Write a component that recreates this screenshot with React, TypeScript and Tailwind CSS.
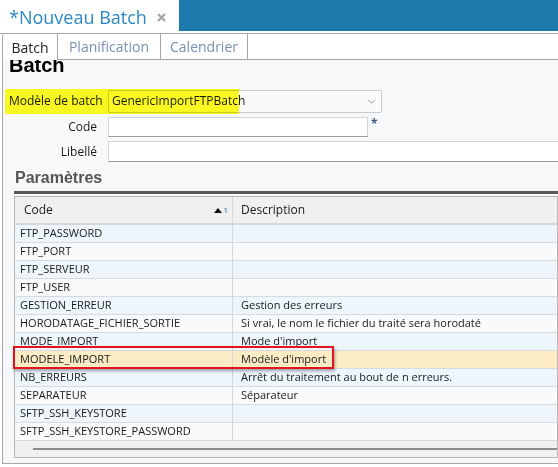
import { ChevronDown } from "lucide-react";

type Param = {
  code: string;
  description: string;
};

const PARAMS: Param[] = [
  { code: "FTP_PASSWORD", description: "" },
  { code: "FTP_PORT", description: "" },
  { code: "FTP_SERVEUR", description: "" },
  { code: "FTP_USER", description: "" },
  { code: "GESTION_ERREUR", description: "Gestion des erreurs" },
  {
    code: "HORODATAGE_FICHIER_SORTIE",
    description: "Si vrai, le nom le fichier du traité sera horodaté",
  },
  { code: "MODE_IMPORT", description: "Mode d'import" },
  { code: "MODELE_IMPORT", description: "Modèle d'import" },
  { code: "NB_ERREURS", description: "Arrêt du traitement au bout de n erreurs." },
  { code: "SEPARATEUR", description: "Séparateur" },
  { code: "SFTP_SSH_KEYSTORE", description: "" },
  { code: "SFTP_SSH_KEYSTORE_PASSWORD", description: "" },
];

const SELECTED = "MODELE_IMPORT";

const ParamRow = ({ param, index }: { param: Param; index: number }) => {
  const isSelected = param.code === SELECTED;
  const bg = isSelected
    ? "bg-[#fbecc6]"
    : index % 2 === 0
      ? "bg-[#edf5fd]"
      : "bg-[#f9fafb]";

  return (
    <div className={`flex h-[18px] border-b border-[#dadada] ${bg}`}>
      <div className="w-[218px] shrink-0 pl-[5px] border-r border-[#d6d6d6] flex items-center whitespace-nowrap">
        {param.code}
      </div>
      <div className="flex-1 pl-[8px] flex items-center whitespace-nowrap">
        {param.description}
      </div>
    </div>
  );
};

export default function App() {
  return (
    <div className="relative w-[558px] h-[467px] overflow-hidden bg-white font-['Open_Sans',sans-serif] text-[11px] text-[#1a1a1a]">
      {/* title bar */}
      <div className="flex h-[33px]">
        <div className="w-[179px] shrink-0 flex items-center pl-[9px] gap-[10px]">
          <span className="text-[18px] leading-none text-[#2b88c2] whitespace-nowrap">
            *Nouveau Batch
          </span>
          <svg width="9" height="9" viewBox="0 0 9 9" className="mt-[1px]">
            <path d="M1 1 L8 8 M8 1 L1 8" stroke="#a3a3a3" strokeWidth="2.2" />
          </svg>
        </div>
        <div className="flex-1 h-[31px] bg-[#1b7aab]" />
      </div>

      {/* tabs */}
      <div className="flex h-[27px] border-t border-[#a6a6a6] text-[14px]">
        <div className="w-[2px] shrink-0" />
        <div className="w-[56px] shrink-0 bg-white border-x border-[#a6a6a6] rounded-tl-[3px] flex items-center justify-center text-[#222]">
          Batch
        </div>
        <div className="w-[103px] shrink-0 border-r border-b border-[#a6a6a6] flex items-center justify-center text-[#7890b0]">
          Planification
        </div>
        <div className="w-[87px] shrink-0 border-r border-b border-[#a6a6a6] flex items-center justify-center text-[#7890b0]">
          Calendrier
        </div>
        <div className="flex-1 border-b border-[#a6a6a6]" />
      </div>

      {/* panel */}
      <div className="ml-[2px] h-[404px] border-l border-b border-[#a6a6a6] bg-[#f7f8fa] overflow-hidden">
        <h1 className="-mt-[7px] pl-[6px] font-['Liberation_Sans',Arial,sans-serif] font-bold text-[20px] leading-[24px] text-black">
          Batch
        </h1>

        <div className="mt-[12px] flex flex-col gap-[3px] text-[12px]">
          <div className="flex items-center h-[24px]">
            <div className="w-[105px] shrink-0 pl-[6px] whitespace-nowrap">Modèle de batch</div>
            <div className="w-[274px] h-[23px] border border-[#cacaca] rounded-[2px] bg-[#fafafa] flex items-center justify-between pl-[3px] pr-[3px]">
              <span>GenericImportFTPBatch</span>
              <ChevronDown size={13} strokeWidth={1.3} className="text-[#666]" />
            </div>
          </div>
          <div className="flex items-center h-[22px]">
            <div className="w-[105px] shrink-0 pr-[11px] text-right">Code</div>
            <div className="w-[260px] h-[20px] bg-white border border-[#d4d4d4] border-b-[#9a9a9a]" />
            <span className="ml-[3px] self-start -mt-[1px] font-bold text-[#3d5c8c]">*</span>
          </div>
          <div className="flex items-center h-[21px]">
            <div className="w-[105px] shrink-0 pr-[11px] text-right">Libellé</div>
            <div className="flex-1 h-[21px] bg-white border-t border-l border-b border-[#d4d4d4] border-b-[#9a9a9a]" />
          </div>
        </div>

        <h2 className="mt-[6px] ml-[11px] pb-[3px] border-b-[3px] border-[#5a5a5a] font-['Liberation_Sans',Arial,sans-serif] font-bold text-[16px] leading-[20px] text-[#555] pl-[1px]">
          Paramètres
        </h2>

        {/* table */}
        <div className="mt-[2px] ml-[11px] border border-[#b8b8b8] bg-white">
          <div className="flex h-[28px] bg-[#f0f0f0] border-b-2 border-[#d6d6d6] text-[12px]">
            <div className="w-[218px] shrink-0 pl-[9px] pr-[4px] border-r border-[#d6d6d6] flex items-center justify-between">
              <span>Code</span>
              <span className="flex items-center gap-[1px]">
                <svg width="8" height="5" viewBox="0 0 8 5">
                  <path d="M0 5 L4 0 L8 5 Z" fill="#111" />
                </svg>
                <span className="text-[8px] text-[#3a5a9a]">1</span>
              </span>
            </div>
            <div className="flex-1 pl-[8px] flex items-center">Description</div>
          </div>
          {PARAMS.map((param, index) => (
            <ParamRow key={param.code} param={param} index={index} />
          ))}
          <div className="h-[16px] bg-[#f0f0f0] pt-[7px] pl-[18px]">
            <div className="h-[2px] bg-[#8a8a8a]" />
          </div>
        </div>
      </div>

      {/* annotations */}
      <div className="absolute left-[5px] top-[89px] w-[234px] h-[25px] bg-[#ffff22] mix-blend-multiply" />
      <div className="absolute left-[13px] top-[346px] w-[321px] h-[23px] border-2 border-[#e3141e] shadow-[1px_2px_3px_rgba(0,0,0,0.35)]" />
    </div>
  );
}
